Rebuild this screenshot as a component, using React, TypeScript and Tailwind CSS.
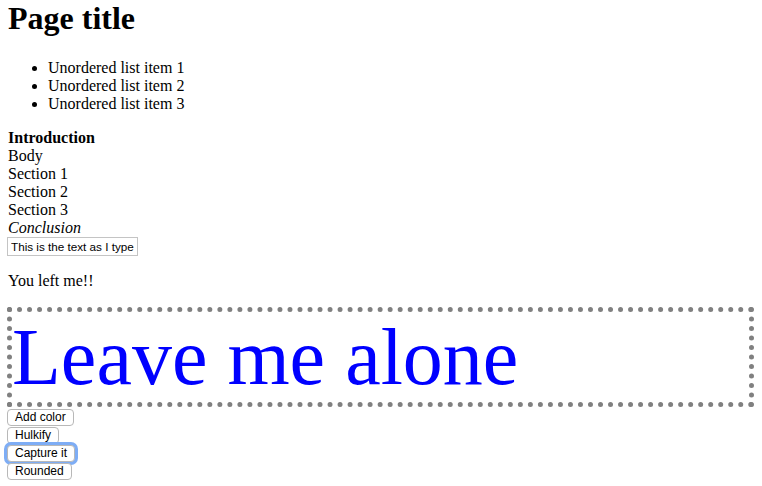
import { useState } from 'react';

const items = ['Unordered list item 1', 'Unordered list item 2', 'Unordered list item 3'];
const buttons = ['Add color', 'Hulkify', 'Capture it', 'Rounded'];

export default function App() {
  const [text, setText] = useState('This is the text as I type');

  return (
    <div className="px-2 font-['Liberation_Serif',serif] text-[16px] leading-[18px] text-black bg-white min-h-screen">
      <h1 className="text-[32px] font-bold leading-[37px] mb-[22px]">Page title</h1>

      <ul className="list-disc pl-10 mb-4">
        {items.map((item) => (
          <li key={item}>{item}</li>
        ))}
      </ul>

      <div className="font-bold">Introduction</div>
      <div>Body</div>
      <div>Section 1</div>
      <div>Section 2</div>
      <div>Section 3</div>
      <div className="italic">Conclusion</div>

      <input
        value={text}
        onChange={(e) => setText(e.target.value)}
        className="block w-[131px] h-[19px] -ml-px px-[3px] border border-[#c4c4c4] font-['Liberation_Sans',sans-serif] text-[11.7px] leading-[15px] outline-none"
      />

      <p className="mt-4">You left me!!</p>

      <div className="mt-[17px] -ml-px border-[5px] border-dotted border-[#808080]">
        <div className="text-[80px] leading-[90px] text-[#0000ff]">Leave me alone</div>
      </div>

      <div className="flex flex-col items-start pt-[2px]">
        {buttons.map((label) => (
          <button
            key={label}
            className={
              'h-[17px] mb-[1px] -ml-px px-[7px] bg-white border border-[#b8b8b8] rounded-[4px] font-["Liberation_Sans",sans-serif] text-[12px] leading-[15px] ' +
              (label === 'Capture it' ? 'ring-[3px] ring-[#7eadf5]' : '')
            }
          >
            {label}
          </button>
        ))}
      </div>
    </div>
  );
}
